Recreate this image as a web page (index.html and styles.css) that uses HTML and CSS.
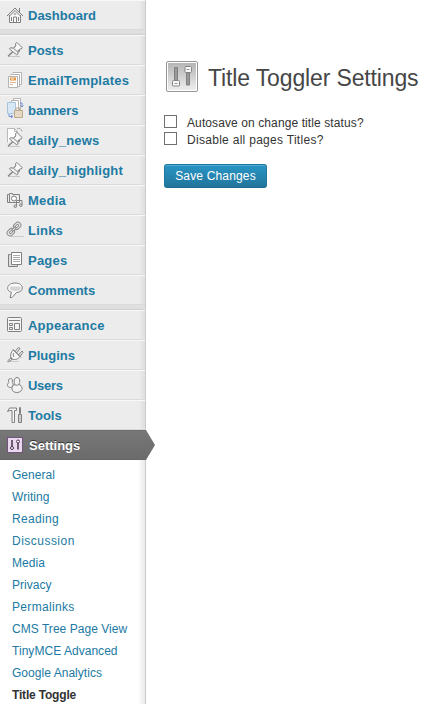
FILE: index.html
```html
<!DOCTYPE html>
<html lang="en">
<head>
<meta charset="utf-8">
<title>Title Toggler Settings</title>
<link rel="stylesheet" href="styles.css">
</head>
<body>
<svg class="defs" width="0" height="0">
  <defs>
    <linearGradient id="metal" x1="0" y1="0" x2="0" y2="1"><stop offset="0" stop-color="#b5b5b5"/><stop offset="1" stop-color="#ededed"/></linearGradient>
    <symbol id="pin" viewBox="0 0 18 18"><path d="M2 15.500H14" stroke="#c4c4c4"/><path d="M9 5.500L11 8.500l3 1.200-2.200 1.300.2 2-1.500.7L3.500 8l1-1.300 3 .5z" fill="#f3f3f3"/><path d="M9.500 2.500l1.500-1 5 5-.7 1.500-1.800.3-2.300 2.200L7.500 7.300l2.300-2.300z" fill="#f8f8f8"/><path d="M6.500 11L2 15.300" stroke-width="1.300"/></symbol>
  </defs>
</svg>
<div class="layout">
  <nav class="sidebar">
    <ul class="menu">
      <li><svg viewBox="0 0 18 18"><path d="M3.500 9v7.500h11V9" fill="#f8f8f8"/><path d="M1 10L9 2l8 8M3.500 10L9 4.500l5.500 5.500M13.500 2v4M7.500 16v-5h3v5M5.500 11v4M12.500 11v4M9 7v2"/></svg><a>Dashboard</a></li>
      <li class="separator"></li>
      <li><svg><use href="#pin"/></svg><a>Posts</a></li>
      <li class="wide"><svg viewBox="0 0 18 18"><g stroke="#b3b3b3"><path d="M6.500 1.500h9v12h-2" fill="#fff"/><path d="M4.500 3.500h9v12h-2" fill="#fff"/><path d="M2.500 5.500h9v11h-9z" fill="#fff"/></g><path d="M4 8h6" stroke="#e4933d" stroke-width="3"/><path d="M5 8h3" stroke="#fff"/><path d="M4 11.500h6M4 13.500h3" stroke="#d8b594"/></svg><a>EmailTemplates</a></li>
      <li class="tall"><svg viewBox="0 0 18 22"><g stroke="#b5b5b5" fill="#fff"><path d="M7.500 1.500h7v11h-7z"/><path d="M5.500 3.500h7v11h-7z"/></g><path d="M1.500 5.500h8v11h-8z" fill="#d7e7f4" stroke="#a9c5dc"/><path d="M8.500 13.500h8v7h-8z" fill="#e5d9c5" stroke="#bba98a"/><path d="M10 13v-2h4v2" stroke="#bba98a"/><path d="M3 17v2.500h3m-1-1.500l2 1.500-2 1.500M14 6h2v4m-1.500-1.500L16 10l1.500-1.500" stroke="#718fd5"/></svg><a>banners</a></li>
      <li class="tall wide"><svg viewBox="0 0 18 22"><path d="M1.500 15.500v-14h7l3 3v4M8.500 1.500v3h3" stroke="#b9b9b9" fill="#fff"/><path d="M11 1.500q4-1 5 3" stroke="#aaa"/><svg y="4" width="18" height="18"><use href="#pin"/></svg></svg><a>daily_news</a></li>
      <li class="wide"><svg><use href="#pin"/></svg><a>daily_highlight</a></li>
      <li class="wide"><svg viewBox="0 0 18 18"><path d="M1.500 3.500h2v-1h3v1h7v8h-12z" fill="#eee"/><circle cx="8" cy="7.500" r="2.500" fill="#fff"/><path d="M10.500 15V9.500h5.500V14M3.500 4v7"/><circle cx="9.300" cy="15.200" r="1.300" fill="#ddd"/><circle cx="14.800" cy="14.200" r="1.300" fill="#ddd"/></svg><a>Media</a></li>
      <li class="wide"><svg viewBox="0 0 18 18"><path d="M5 15.500h13" stroke="#ccc"/><g transform="rotate(-45 8 8)" stroke="#888"><rect x="-.5" y="5" width="8" height="6" rx="3" fill="#e5e5e5"/><rect x="2" y="7" width="3.500" height="2" rx="1" fill="#fff"/><rect x="8.500" y="5" width="8" height="6" rx="3" fill="#e5e5e5"/><rect x="10.500" y="7" width="3.500" height="2" rx="1" fill="#fff"/><rect x="5.500" y="7" width="5" height="2" rx="1" fill="#eee"/></g></svg><a>Links</a></li>
      <li class="wide"><svg viewBox="0 0 18 18"><path d="M4.500 3.500h-2v12h9v-1.500" fill="#ddd"/><path d="M5.500 1.500h10v12h-10z" fill="#fff"/><path d="M7 4.500h7M7 6.500h7M7 8.500h7M7 10.500h7" stroke="#aaa"/></svg><a>Pages</a></li>
      <li><svg viewBox="0 0 18 18"><path d="M9 2c10 0 9 9.500 1.500 9.500L6 16.500H4l1.500-5.200C-1 9.500 1 2 9 2z" fill="#fafafa"/><path d="M4 8.300c1 2.200 9 2.200 10.500 0V5.500H4z" fill="#d5d5d5" stroke="none"/></svg><a>Comments</a></li>
      <li class="separator"></li>
      <li class="wide"><svg viewBox="0 0 18 18"><rect x="1.500" y="1.500" width="14" height="14" rx="1" fill="#f4f4f4"/><path d="M3 4.500h11"/><path d="M8.500 7.500h5v6h-5zM3.500 7.500h3v2h-3zM3.500 11.500h3v2h-3z"/></svg><a>Appearance</a></li>
      <li><svg viewBox="0 0 18 18"><path d="M3 15.500h10" stroke="#ccc"/><path d="M7.500 4l6.500 6.500c-2 3-5 3.500-8 2.500L5 12C4 9 5 6 7.500 4z" fill="#f8f8f8"/><path d="M6.500 3l8.500 8.500M9 5.500L12.500 1.500l1.500 1-3.500 4.500M12.500 9L16 5l1.200 1.200-3 4M5.500 11.500L1.500 15l1 1L6.500 13M8 7c-1 1-1 3 0 4"/></svg><a>Plugins</a></li>
      <li class="tight"><svg viewBox="0 0 18 18"><g fill="#f3f3f3"><path d="M4.500 2.500c2 0 2.500 2 1.500 4 2 1 1 5-1.500 5s-4-2-2.500-4c.3-.5 1-1 1-1C2 5 2.500 2.500 4.500 2.500z"/><path d="M11 1.500c3 0 3.500 4.500 1.700 7 5 1 4.500 8-2 8-6 0-6-7-1.700-8C7.500 6 8 1.500 11 1.500z"/><path d="M9 8.500c1 1 2.500 1 3.700 0"/></g></svg><a>Users</a></li>
      <li><svg viewBox="0 0 18 18"><path d="M1.500 5.500l2-3.500h7v2.500h-2v12h-2.500v-12H4z" fill="#f3f3f3"/><path d="M13.500 1.500h1v6h-1z"/><path d="M12.500 8.500h3v8h-3z" fill="#ccc"/></svg><a>Tools</a></li>
      <li class="current"><svg viewBox="0 0 18 18"><rect x="1.500" y="1.500" width="15" height="15" fill="#ead8ef" stroke="#70547a"/><path d="M6 4v8M12 7v6.500" stroke="#49334f" stroke-width="1.500"/><circle cx="6" cy="12" r="1.500" fill="#fff" stroke="#49334f"/><circle cx="12" cy="5.500" r="1.500" fill="#fff" stroke="#49334f"/></svg><a>Settings</a></li>
    </ul>
    <ul class="submenu">
      <li>General</li><li>Writing</li><li class="wide">Reading</li><li class="wider">Discussion</li><li>Media</li><li>Privacy</li><li class="wide">Permalinks</li><li>CMS Tree Page View</li><li>TinyMCE Advanced</li><li>Google Analytics</li><li class="active">Title Toggle</li>
    </ul>
  </nav>
  <main class="content">
    <header class="heading">
      <svg width="32" height="32" viewBox="0 0 32 32"><rect x=".5" y=".5" width="31" height="30" rx="1.500" fill="#fff" stroke="#959595"/><rect x="2" y="2" width="28" height="27" fill="url(#metal)"/><path d="M8.500 6.500h3v13h-3zM20.500 12h3v12h-3z" fill="#999" stroke="#808080"/><rect x="6.500" y="19.500" width="7" height="5.500" rx="1" fill="#f8f8f8" stroke="#858585"/><rect x="19" y="5.500" width="6.500" height="6" rx="1" fill="#f8f8f8" stroke="#858585"/><path d="M8.500 22.500h3M20.500 8.500h3" stroke="#999"/></svg>
      <h1>Title Toggler Settings</h1>
    </header>
    <form>
      <label class="option"><input type="checkbox"><span>Autosave on change title status?</span></label>
      <label class="option spaced"><input type="checkbox"><span>Disable all pages Titles?</span></label>
      <button type="button">Save Changes</button>
    </form>
  </main>
</div>
</body>
</html>
```
FILE: styles.css
```css
* { box-sizing: border-box; }
body { margin: 0; background: #fff; font: 12px "Liberation Sans", Arial, sans-serif; color: #333; overflow: hidden; }
ul { list-style: none; margin: 0; padding: 0; }
.defs { display: block; }
.layout { display: flex; height: 704px; }
.sidebar { width: 146px; flex: none; border-right: 1px solid #ccc; background: linear-gradient(90deg, #fff 138px, #e9e9e9 145px); }
.menu li { display: flex; align-items: center; height: 30px; padding-left: 6px; gap: 4px; background: linear-gradient(90deg, #ececec 139px, #dedede 145px); border-top: 1px solid #f9f9f9; border-bottom: 1px solid #dadada; color: #217aa3; font-weight: bold; font-size: 13px; line-height: 18px; }
.menu li svg { width: 18px; height: 18px; flex: none; fill: none; stroke: #808080; stroke-width: 1; }
.menu li a { padding-top: 1px; }
.menu .wide { letter-spacing: .22px; }
.menu .tight { letter-spacing: -.3px; }
.menu .tall > svg { height: 22px; margin-bottom: 4px; }
.menu .separator { height: 5px; background: #dfdfdf; border-top: 0; border-bottom: 1px solid #cfcfcf; }
.menu .current { position: relative; background: linear-gradient(#777, #6b6b6b); border-top: 1px solid #6d6d6d; border-bottom: 1px solid #666; color: #fff; text-shadow: 0 -1px 0 #333; gap: 5px; width: 146px; }
.current::after { content: ""; position: absolute; left: 146px; top: -1px; width: 9px; height: 30px; background: linear-gradient(#777, #6b6b6b); clip-path: polygon(0 0, 100% 50%, 0 100%); }
.submenu { padding: 4px 0 0 12px; color: #217aa3; }
.submenu li { height: 22px; line-height: 22px; white-space: nowrap; letter-spacing: .04px; }
.submenu .wide { letter-spacing: .33px; }
.submenu .wider { letter-spacing: .48px; }
.submenu .active { color: #333; font-weight: bold; letter-spacing: -.18px; }
.content { padding: 60px 0 0 18px; flex: none; }
.heading { display: flex; align-items: center; gap: 10px; height: 33px; padding-left: 2px; }
h1 { margin: 3px 0 0; font-size: 23px; font-weight: normal; line-height: 32px; white-space: nowrap; color: #464646; letter-spacing: -.14px; }
form { margin-top: 20px; }
.option { display: flex; align-items: center; height: 17px; gap: 10px; letter-spacing: .1px; }
.option.spaced { letter-spacing: .29px; }
.option input { appearance: none; width: 13px; height: 13px; margin: 0; border: 1px solid #707070; background: #fff; }
.option span { padding-top: 2px; }
button { display: block; margin-top: 17px; width: 103px; height: 24px; padding: 0; border: 1px solid #21759b; border-bottom-color: #1e6a8d; border-radius: 3px; background: linear-gradient(#2a95c5, #21759b); color: #fff; font: 12px "Liberation Sans", Arial, sans-serif; letter-spacing: .16px; box-shadow: inset 0 1px 0 rgba(120,200,230,.5); }
```
